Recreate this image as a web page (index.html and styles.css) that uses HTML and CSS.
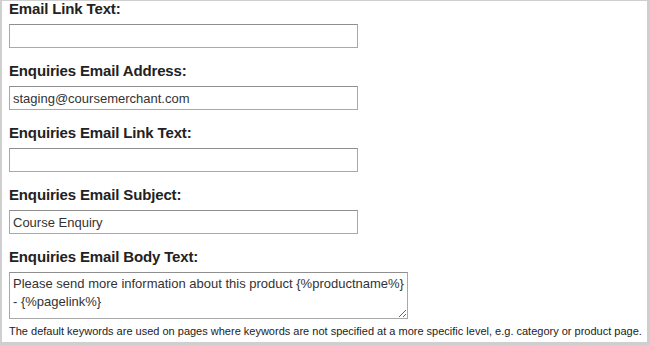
FILE: index.html
```html
<html>

<head>
    <title>Enquiries settings</title>
    <link rel="stylesheet" href="styles.css">
</head>

<body>
    <div class="panel">
        <div class="field">
            <div class="label">Email Link Text:</div>
            <input class="text" type="text" value="">
        </div>
        <div class="field">
            <div class="label">Enquiries Email Address:</div>
            <input class="text" type="text" value="staging@coursemerchant.com">
        </div>
        <div class="field">
            <div class="label">Enquiries Email Link Text:</div>
            <input class="text" type="text" value="">
        </div>
        <div class="field">
            <div class="label">Enquiries Email Subject:</div>
            <input class="text" type="text" value="Course Enquiry">
        </div>
        <div class="field">
            <div class="label">Enquiries Email Body Text:</div>
            <textarea class="body">Please send more information about this product {%productname%} - {%pagelink%}</textarea>
        </div>
        <p class="note">The default keywords are used on pages where keywords are not specified at a more specific level, e.g. category or product page.</p>
    </div>
</body>

</html>
```

FILE: styles.css
```css
:root {
    --frame: #cfcfcf;
    --input-border: #a9a9a9;
    --text: #222;
    --value: #333;
}

body {
    margin: 0;
    font-family: "Liberation Sans", Arial, sans-serif;
    color: var(--text);
}

.panel {
    width: 650px;
    height: 345px;
    box-sizing: border-box;
    border-top: 1px solid var(--frame);
    border-left: 2px solid var(--frame);
    border-right: 3px solid var(--frame);
    border-bottom: 3px solid var(--frame);
    padding: 0 0 0 7px;
    background: #fff;
}

.field {
    display: flex;
    flex-direction: column;
    align-items: flex-start;
    margin-bottom: 15px;
}

.label {
    font-size: 15px;
    font-weight: bold;
    line-height: 16px;
    letter-spacing: -0.01em;
    margin-bottom: 7px;
}

.text {
    width: 349px;
    height: 24px;
    box-sizing: border-box;
    border: 1px solid var(--input-border);
    border-top-color: #8f8f8f;
    padding: 0 3px;
    font-family: "Liberation Sans", Arial, sans-serif;
    font-size: 13px;
    color: var(--value);
    margin: 0;
}

.body {
    width: 399px;
    height: 47px;
    box-sizing: border-box;
    border: 1px solid var(--input-border);
    border-top-color: #8f8f8f;
    padding: 2px 3px;
    font-family: "Liberation Sans", Arial, sans-serif;
    font-size: 13px;
    line-height: 18px;
    color: var(--value);
    margin: 0;
    resize: both;
    overflow: hidden;
}

.note {
    margin: -10px 0 0;
    font-size: 11px;
    line-height: 14px;
    white-space: nowrap;
    color: var(--text);
}
```
